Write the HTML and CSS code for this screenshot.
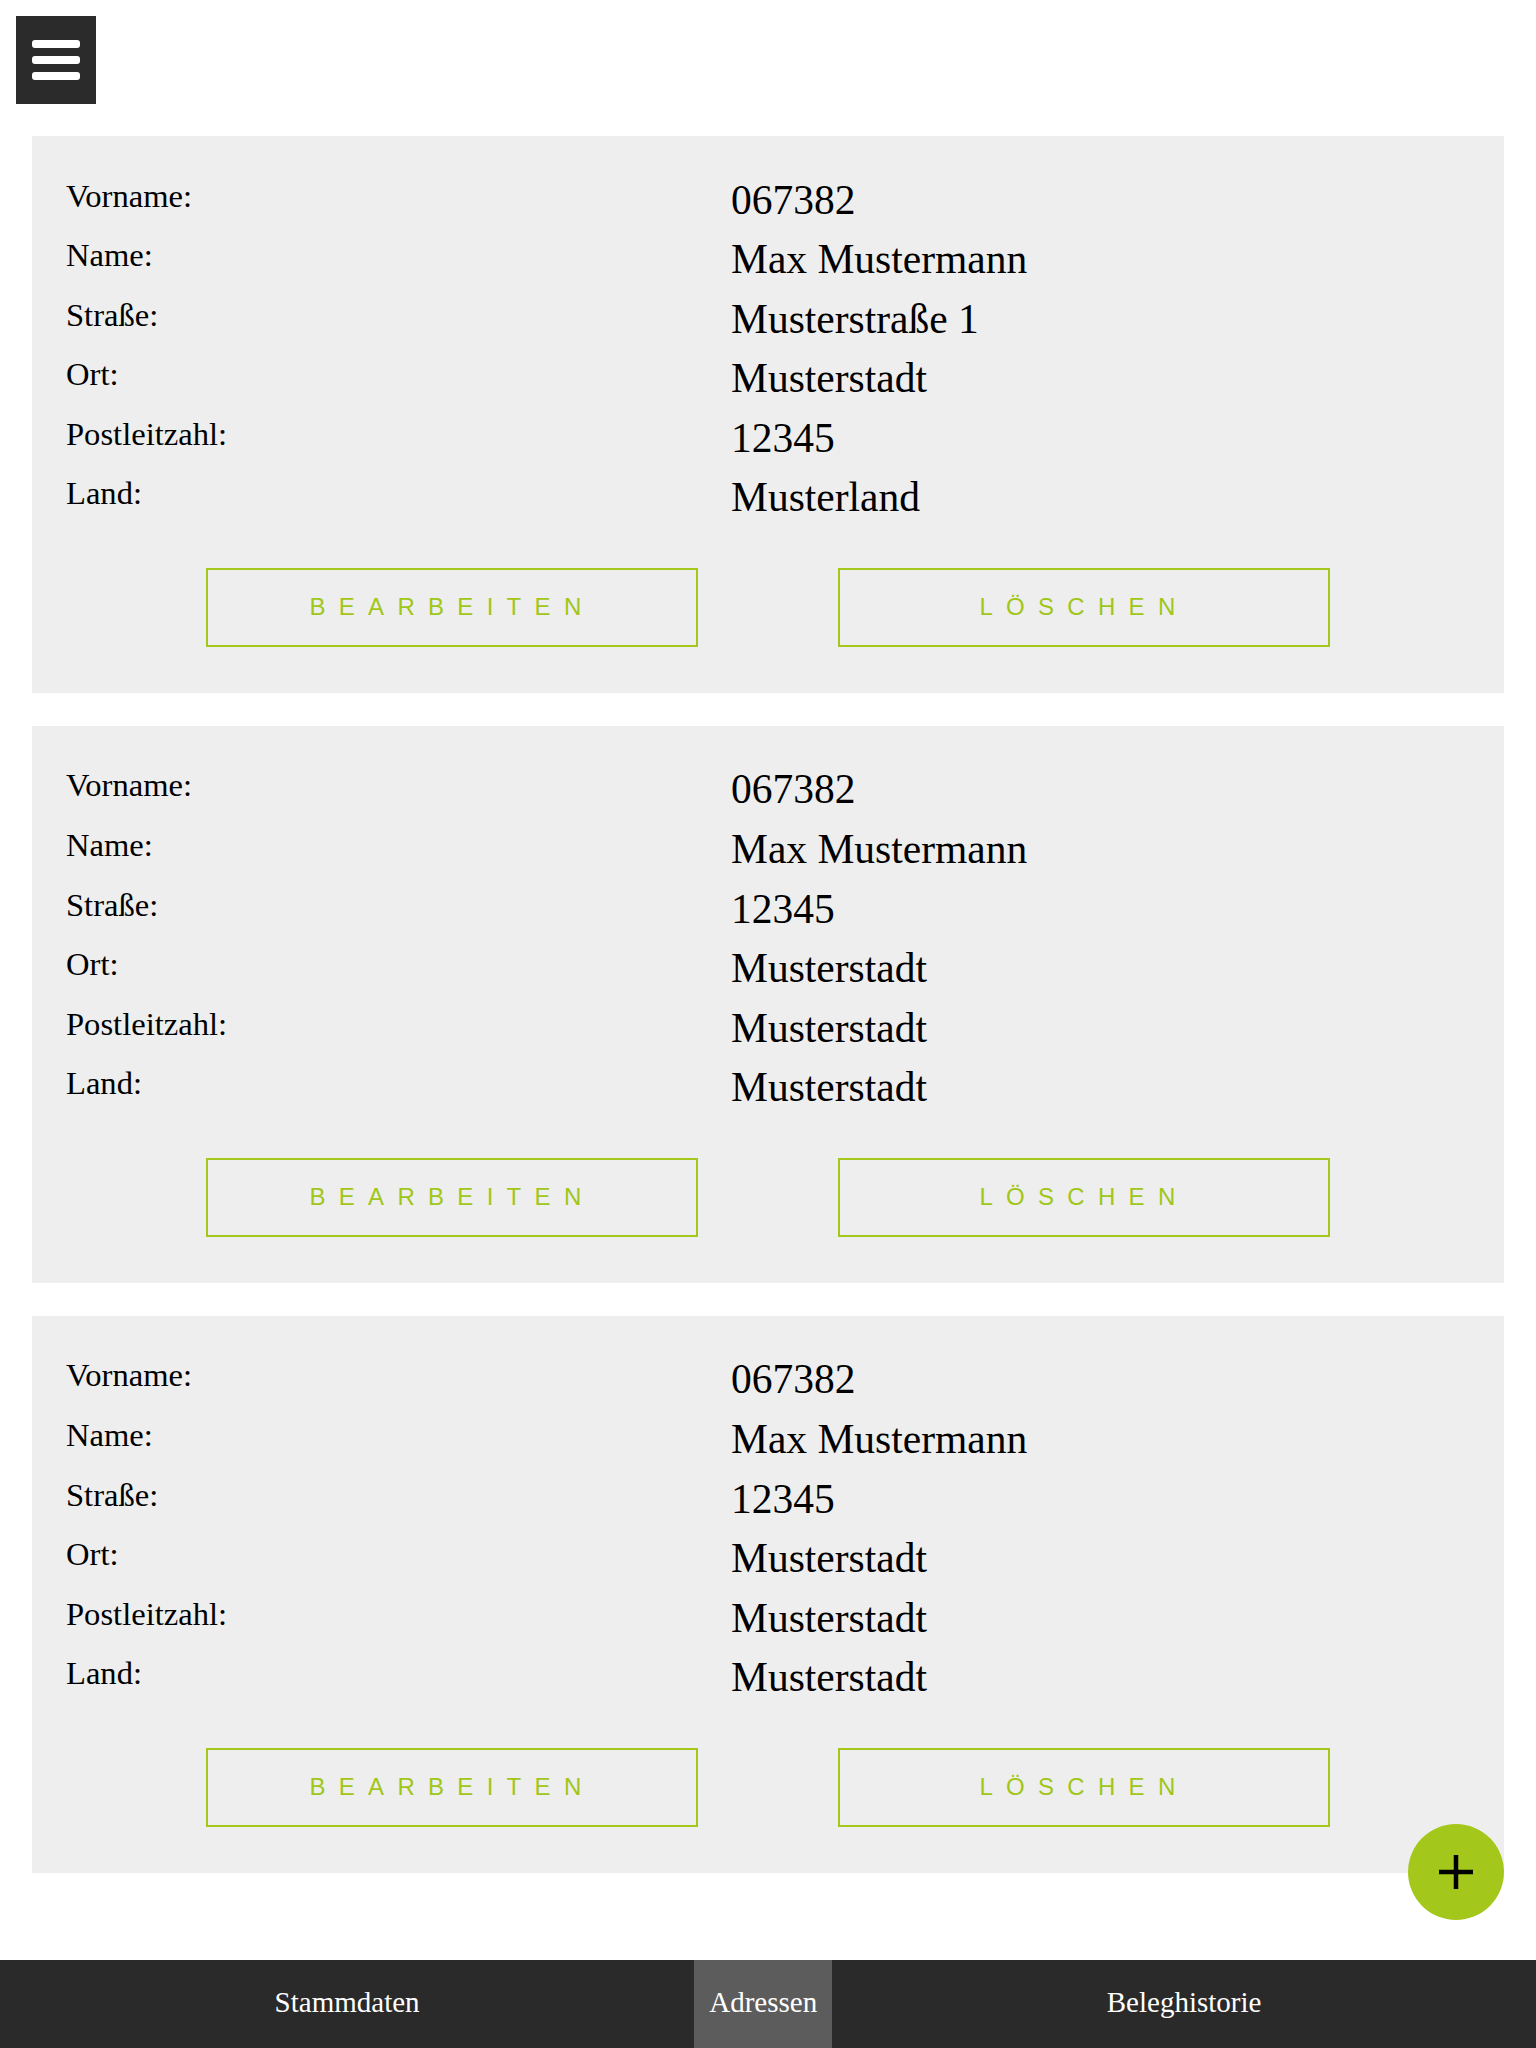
FILE: index.html
```html
<!DOCTYPE html>
<html lang="de">
<head>
<meta charset="utf-8">
<title>Adressen</title>
<link rel="stylesheet" href="styles.css">
</head>
<body>
<header class="topbar">
  <button class="menu-btn" aria-label="Menü">
    <span class="bar"></span><span class="bar"></span><span class="bar"></span>
  </button>
</header>

<main class="cards">
  <section class="card">
    <div class="rows">
      <div class="row"><span class="label">Vorname:</span><span class="value">067382</span></div>
      <div class="row"><span class="label">Name:</span><span class="value">Max Mustermann</span></div>
      <div class="row"><span class="label">Straße:</span><span class="value">Musterstraße 1</span></div>
      <div class="row"><span class="label">Ort:</span><span class="value">Musterstadt</span></div>
      <div class="row"><span class="label">Postleitzahl:</span><span class="value">12345</span></div>
      <div class="row"><span class="label">Land:</span><span class="value">Musterland</span></div>
    </div>
    <div class="actions">
      <button class="btn">BEARBEITEN</button>
      <button class="btn">LÖSCHEN</button>
    </div>
  </section>

  <section class="card">
    <div class="rows">
      <div class="row"><span class="label">Vorname:</span><span class="value">067382</span></div>
      <div class="row"><span class="label">Name:</span><span class="value">Max Mustermann</span></div>
      <div class="row"><span class="label">Straße:</span><span class="value">12345</span></div>
      <div class="row"><span class="label">Ort:</span><span class="value">Musterstadt</span></div>
      <div class="row"><span class="label">Postleitzahl:</span><span class="value">Musterstadt</span></div>
      <div class="row"><span class="label">Land:</span><span class="value">Musterstadt</span></div>
    </div>
    <div class="actions">
      <button class="btn">BEARBEITEN</button>
      <button class="btn">LÖSCHEN</button>
    </div>
  </section>

  <section class="card">
    <div class="rows">
      <div class="row"><span class="label">Vorname:</span><span class="value">067382</span></div>
      <div class="row"><span class="label">Name:</span><span class="value">Max Mustermann</span></div>
      <div class="row"><span class="label">Straße:</span><span class="value">12345</span></div>
      <div class="row"><span class="label">Ort:</span><span class="value">Musterstadt</span></div>
      <div class="row"><span class="label">Postleitzahl:</span><span class="value">Musterstadt</span></div>
      <div class="row"><span class="label">Land:</span><span class="value">Musterstadt</span></div>
    </div>
    <div class="actions">
      <button class="btn">BEARBEITEN</button>
      <button class="btn">LÖSCHEN</button>
    </div>
  </section>
</main>

<button class="fab" aria-label="Hinzufügen">
  <svg width="34" height="34" viewBox="0 0 34 34"><path d="M17 0V34M0 17H34" stroke="#000" stroke-width="4.5" fill="none"/></svg>
</button>

<nav class="bottomnav">
  <a class="nav-item">Stammdaten</a>
  <a class="nav-item active">Adressen</a>
  <a class="nav-item">Beleghistorie</a>
</nav>
</body>
</html>
```

FILE: styles.css
```css
* { box-sizing: border-box; }

html, body {
  margin: 0;
  padding: 0;
  background: #ffffff;
  font-family: "Liberation Serif", "Times New Roman", serif;
  color: #000;
}

.topbar {
  padding: 16px 16px 0;
  display: flex;
}

.menu-btn {
  width: 80px;
  height: 88px;
  margin: 0;
  padding: 24px 16px;
  border: 0;
  background: #2b2b2b;
  display: flex;
  flex-direction: column;
  gap: 8px;
}

.menu-btn .bar {
  display: block;
  width: 48px;
  height: 8px;
  border-radius: 3px;
  background: #ffffff;
}

.cards {
  padding: 32px 32px 0;
  display: flex;
  flex-direction: column;
  gap: 33px;
}

.card {
  background: #eeeeee;
  padding: 42px 34px 46px;
}

.rows {
  display: grid;
  grid-template-columns: 665px 1fr;
  grid-auto-rows: 59.6px;
}

.row {
  display: contents;
}

.label {
  font-size: 32.6px;
  line-height: 1.149;
  margin-top: -0.5px;
}

.value {
  font-size: 41.5px;
  line-height: 1.149;
  margin-top: -1.5px;
}

.actions {
  margin-top: 32.4px;
  display: flex;
  justify-content: center;
  gap: 140px;
}

.btn {
  width: 492px;
  height: 79px;
  margin: 0;
  padding: 0;
  border: 2px solid #a3c81b;
  background: transparent;
  color: #a0c617;
  font-family: "Liberation Sans", Arial, sans-serif;
  font-size: 24px;
  letter-spacing: 13.3px;
  display: flex;
  align-items: center;
  justify-content: center;
}

.fab {
  position: fixed;
  right: 32px;
  bottom: 128px;
  width: 96px;
  height: 96px;
  margin: 0;
  padding: 0;
  border: 0;
  border-radius: 50%;
  background: #a3c81b;
  display: flex;
  align-items: center;
  justify-content: center;
}

.bottomnav {
  position: fixed;
  left: 0;
  right: 0;
  bottom: 0;
  height: 88px;
  background: #2a2a2a;
  display: flex;
}

.nav-item {
  flex: 0 0 auto;
  padding: 0 15px 4px;
  display: flex;
  align-items: center;
  justify-content: center;
  color: #ffffff;
  font-size: 29px;
  text-decoration: none;
}

.nav-item:first-child,
.nav-item:last-child {
  flex: 1 1 auto;
}

.nav-item.active {
  background: #5c5c5c;
}
```
